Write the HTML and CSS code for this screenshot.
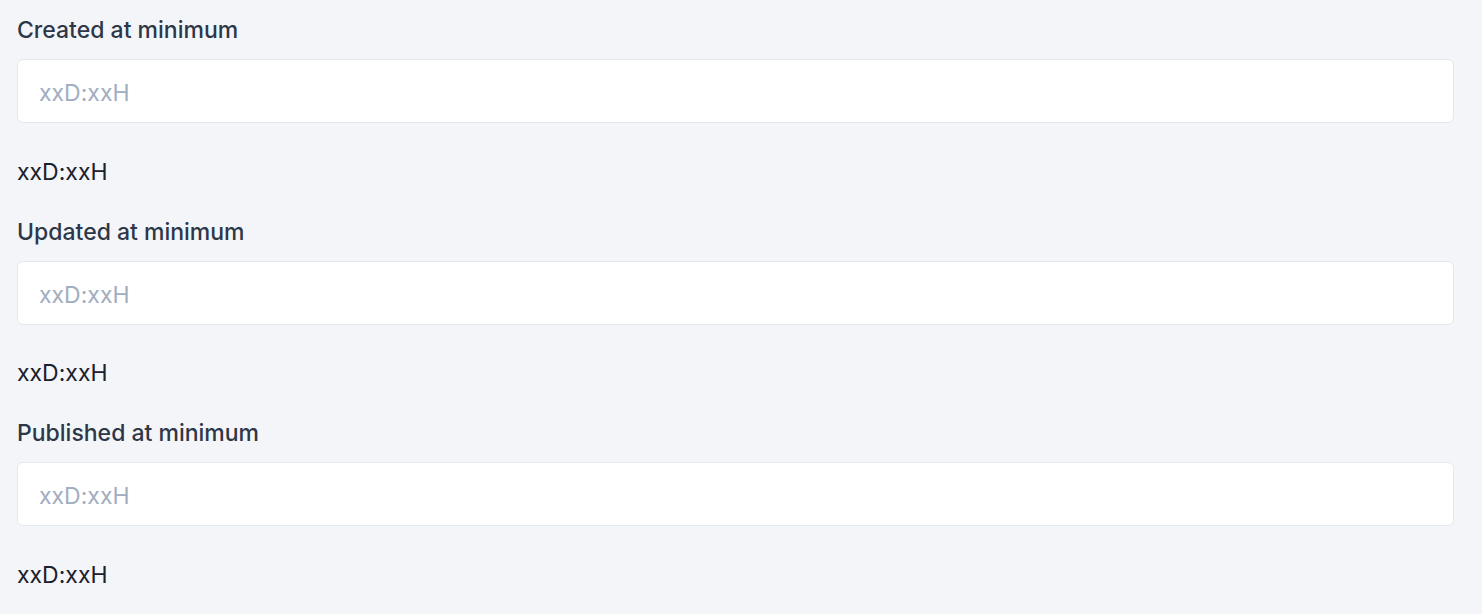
FILE: index.html
```html
<!DOCTYPE html>
<html lang="en">
<head>
<meta charset="utf-8">
<title>Filters</title>
<link rel="stylesheet" href="styles.css">
</head>
<body>
<main class="form">
  <div class="field">
    <label class="field-label" for="created">Created at minimum</label>
    <input class="field-input" id="created" type="text" placeholder="xxD:xxH">
    <p class="field-help">xxD:xxH</p>
  </div>
  <div class="field">
    <label class="field-label" for="updated">Updated at minimum</label>
    <input class="field-input" id="updated" type="text" placeholder="xxD:xxH">
    <p class="field-help">xxD:xxH</p>
  </div>
  <div class="field">
    <label class="field-label" for="published">Published at minimum</label>
    <input class="field-input" id="published" type="text" placeholder="xxD:xxH">
    <p class="field-help">xxD:xxH</p>
  </div>
</main>
</body>
</html>
```

FILE: styles.css
```css
html, body {
  margin: 0;
  padding: 0;
  background: #f4f5f9;
}

body {
  font-family: Inter, "Noto Sans", sans-serif;
  width: 1482px;
  height: 614px;
  overflow: hidden;
}

.form {
  display: flex;
  flex-direction: column;
  gap: 28px;
  padding: 14px 28px 0 17px;
}

.field {
  display: flex;
  flex-direction: column;
}

.field-label {
  font-size: 23px;
  line-height: 32px;
  font-weight: 500;
  color: #2d3748;
  margin-bottom: 13px;
}

.field-input {
  box-sizing: border-box;
  width: 100%;
  height: 64px;
  margin: 0;
  padding: 4px 21px 0 21px;
  border: 1px solid #e2e8f0;
  border-radius: 6px;
  background: #ffffff;
  font-family: inherit;
  font-size: 23px;
  line-height: 32px;
  color: #1a202c;
  outline: none;
}

.field-input::placeholder {
  color: #a0aec0;
  opacity: 1;
}

.field-help {
  margin: 32.5px 0 0 0;
  font-size: 23px;
  line-height: 32px;
  color: #1a202c;
}
```
